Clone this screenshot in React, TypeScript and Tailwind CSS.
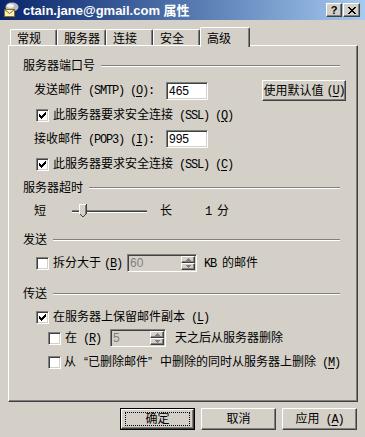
import React from 'react';

const raised =
  'border border-t-white border-l-white border-r-[#404040] border-b-[#404040] shadow-[inset_-1px_-1px_#808080]';
const sunken =
  'border border-t-[#808080] border-l-[#808080] border-r-white border-b-white shadow-[inset_1px_1px_#404040,inset_-1px_-1px_#d4d0c8]';

// latin text the way the dialog's font draws it: narrow, fixed pitch
function L({ children }: { children: React.ReactNode }) {
  return (
    <span className="font-['Liberation_Mono',monospace] text-[12px] tracking-[-1.2px]">{children}</span>
  );
}

function Key({ k }: { k: string }) {
  return (
    <L>
      (<span className="underline underline-offset-[2px]">{k}</span>)
    </L>
  );
}

function Check({ checked }: { checked?: boolean }) {
  return (
    <span className={`w-[13px] h-[13px] shrink-0 bg-white flex items-center justify-center ${sunken}`}>
      {checked && (
        <svg width="7" height="7" viewBox="0 0 7 7" shapeRendering="crispEdges">
          <path
            d="M0 2h1v3h-1z M1 3h1v3h-1z M2 4h1v3h-1z M3 3h1v3h-1z M4 2h1v3h-1z M5 1h1v3h-1z M6 0h1v3h-1z"
            fill="#000"
          />
        </svg>
      )}
    </span>
  );
}

function Section({ title }: { title: string }) {
  return (
    <div className="h-[20px] flex items-center ml-[14px] mr-[17px]">
      <span>{title}</span>
      <div className="flex-1 ml-[6px] h-[2px] border-t border-b border-t-[#808080] border-b-white" />
    </div>
  );
}

function SpinArrow({ up }: { up?: boolean }) {
  return (
    <div className={`flex-1 flex items-center justify-center bg-[#d4d0c8] ${raised}`}>
      <svg width="5" height="3" viewBox="0 0 5 3" shapeRendering="crispEdges">
        <path d={up ? 'M2 0h1v1h1v1h1v1h-5v-1h1v-1h1z' : 'M0 0h5v1h-1v1h-1v1h-1v-1h-1v-1h-1z'} fill="#808080" />
      </svg>
    </div>
  );
}

function Spin({ value, className }: { value: string; className: string }) {
  return (
    <div className={`h-[18px] flex bg-[#d4d0c8] ${sunken} ${className}`}>
      <span className="flex-1 pl-[2px] leading-[16px] text-[#808080]">{value}</span>
      <div className="w-[15px] flex flex-col py-[1px] pr-[1px]">
        <SpinArrow up />
        <SpinArrow />
      </div>
    </div>
  );
}

function Button({ children, primary }: { children: React.ReactNode; primary?: boolean }) {
  if (primary) {
    return (
      <div className="w-[75px] h-[22px] border border-black">
        <div className={`w-full h-full flex items-center justify-center bg-[#d4d0c8] ${raised}`}>
          <div className="w-[65px] h-[14px] border border-dotted border-black flex items-center justify-center">
            {children}
          </div>
        </div>
      </div>
    );
  }
  return (
    <div className={`w-[75px] h-[22px] flex items-center justify-center bg-[#d4d0c8] ${raised}`}>
      {children}
    </div>
  );
}

function TitleIcon() {
  return (
    <svg width="16" height="16" viewBox="0 0 16 16">
      <ellipse cx="9" cy="5" rx="6.5" ry="4.5" fill="#b8bcc4" />
      <ellipse cx="7.5" cy="3.8" rx="3.5" ry="2" fill="#f2f2f2" />
      <rect x="1.5" y="7.5" width="10" height="7" fill="#fff4b8" stroke="#8a6a20" />
      <path d="M1.5 7.5 L6.5 11.5 L11.5 7.5" fill="none" stroke="#8a6a20" />
    </svg>
  );
}

export default function App() {
  const tabs = [
    { label: '常规', w: 'w-[47px]' },
    { label: '服务器', w: 'w-[49px]' },
    { label: '连接', w: 'w-[47px]' },
    { label: '安全', w: 'w-[47px]' },
  ];

  return (
    <div className="w-[365px] h-[437px] overflow-hidden bg-[#d4d0c8] flex flex-col text-[12px] text-black font-['Liberation_Sans','Noto_Sans_CJK_SC',sans-serif]">
      {/* title bar */}
      <div className="h-[20px] shrink-0 flex items-center pl-[3px] pr-[5px] bg-linear-to-r from-[#0a246a] to-[#a6caf0]">
        <TitleIcon />
        <span className="ml-[4px] text-white font-bold text-[13px] leading-none">ctain.jane@gmail.com 属性</span>
        <div className="ml-auto flex gap-[1px]">
          <div className={`w-[16px] h-[14px] bg-[#d4d0c8] flex items-center justify-center font-bold text-[11px] leading-none ${raised}`}>
            ?
          </div>
          <div className={`w-[17px] h-[14px] bg-[#d4d0c8] flex items-center justify-center ${raised}`}>
            <svg width="8" height="7" viewBox="0 0 8 7" shapeRendering="crispEdges">
              <path
                d="M0 0h2v1h-2z M6 0h2v1h-2z M1 1h2v1h-2z M5 1h2v1h-2z M2 2h4v1h-4z M3 3h2v1h-2z M2 4h4v1h-4z M1 5h2v1h-2z M5 5h2v1h-2z M0 6h2v1h-2z M6 6h2v1h-2z"
                fill="#000"
              />
            </svg>
          </div>
        </div>
      </div>

      {/* tabs + panel */}
      <div className="pl-[8px] pt-[7px]">
        <div className="h-[18px] flex items-end ml-[2px]">
          {tabs.map((t) => (
            <div
              key={t.label}
              className={`${t.w} h-[16px] flex items-center pl-[6px] pt-[2px] rounded-t-[2px] border-t border-l border-r border-t-white border-l-white border-r-[#404040] shadow-[inset_-1px_0_#808080]`}
            >
              {t.label}
            </div>
          ))}
          <div className="relative z-10 w-[50px] h-[20px] -mb-[2px] flex items-start pl-[6px] pt-[2px] bg-[#d4d0c8] rounded-t-[2px] border-t border-l border-r border-t-white border-l-white border-r-[#404040] shadow-[inset_-1px_0_#808080]">
            高级
          </div>
        </div>

        <div className={`w-[350px] h-[357px] pt-[10px] flex flex-col ${raised}`}>
          <Section title="服务器端口号" />

          <div className="h-[21px] mt-[4px] flex items-center ml-[25px]">
            <span className="w-[132px] shrink-0">
              发送邮件<L> (SMTP) </L>
              <Key k="O" />
              <L>:</L>
            </span>
            <div className={`w-[42px] h-[18px] bg-white pl-[2px] leading-[16px] ${sunken}`}>465</div>
            <div className={`ml-[54px] w-[84px] h-[21px] flex items-center justify-center ${raised}`}>
              使用默认值
              <span className="ml-[3px]">
                <Key k="U" />
              </span>
            </div>
          </div>

          <div className="h-[20px] mt-[4px] flex items-center ml-[27px]">
            <Check checked />
            <span className="ml-[4px]">
              此服务器要求安全连接<L> (SSL) </L>
              <Key k="Q" />
            </span>
          </div>

          <div className="h-[20px] mt-[4px] flex items-center ml-[25px]">
            <span className="w-[132px] shrink-0">
              接收邮件<L> (POP3) </L>
              <Key k="I" />
              <L>:</L>
            </span>
            <div className={`w-[42px] h-[18px] bg-white pl-[2px] leading-[16px] ${sunken}`}>995</div>
          </div>

          <div className="h-[20px] mt-[5px] flex items-center ml-[27px]">
            <Check checked />
            <span className="ml-[4px]">
              此服务器要求安全连接<L> (SSL) </L>
              <Key k="C" />
            </span>
          </div>

          <div className="mt-[4px]">
            <Section title="服务器超时" />
          </div>

          <div className="h-[20px] mt-[3px] flex items-center ml-[25px]">
            <span>短</span>
            <div className="relative ml-[26px] w-[75px] h-[3px] border-t border-b border-t-[#808080] border-b-white bg-[#404040]">
              <svg
                className="absolute left-[7px] -top-[7px]"
                width="8"
                height="14"
                viewBox="0 0 8 14"
                shapeRendering="crispEdges"
              >
                <path d="M0 0h8v10l-4 4l-4-4z" fill="#d4d0c8" />
                <path d="M0 0h7v1h-6v9h-1z" fill="#fff" />
                <path d="M7 0h1v10h-1z M1 10h1v1h-1z M2 11h1v1h-1z M3 12h1v1h-1z M6 10h1v1h-1z M5 11h1v1h-1z M4 12h1v1h-1z" fill="#404040" />
                <path d="M6 1h1v9h-1z" fill="#808080" />
              </svg>
            </div>
            <span className="ml-[13px]">长</span>
            <span className="ml-[33px]">
              <L>1 </L>分
            </span>
          </div>

          <div className="mt-[9px]">
            <Section title="发送" />
          </div>

          <div className="h-[20px] mt-[3px] flex items-center ml-[27px]">
            <Check />
            <span className="ml-[4px] w-[74px] shrink-0">
              拆分大于
              <span className="ml-[3px]">
                <Key k="B" />
              </span>
            </span>
            <Spin value="60" className="w-[70px]" />
            <span className="ml-[7px]">
              <L>KB </L>的邮件
            </span>
          </div>

          <div className="mt-[11px]">
            <Section title="传送" />
          </div>

          <div className="h-[20px] mt-[3px] flex items-center ml-[27px]">
            <Check checked />
            <span className="ml-[4px]">
              在服务器上保留邮件副本<L> </L>
              <Key k="L" />
            </span>
          </div>

          <div className="h-[20px] mt-[1px] flex items-center ml-[39px]">
            <Check />
            <span className="ml-[4px] w-[45px] shrink-0">
              在<L> </L>
              <Key k="R" />
            </span>
            <Spin value="5" className="w-[56px]" />
            <span className="ml-[9px]">天之后从服务器删除</span>
          </div>

          <div className="h-[20px] mt-[4px] flex items-center ml-[39px]">
            <Check />
            <span className="ml-[3px]">
              从<span className="ml-[8px]">“</span>已删除邮件<span className="mr-[8px]">”</span>中删除的同时从服务器上删除<L> </L>
              <Key k="M" />
            </span>
          </div>
        </div>
      </div>

      {/* dialog buttons */}
      <div className="mt-[6px] pr-[8px] flex justify-end gap-[6px]">
        <Button primary>确定</Button>
        <Button>取消</Button>
        <Button>
          <span>
            应用<L> </L>
            <Key k="A" />
          </span>
        </Button>
      </div>
    </div>
  );
}
